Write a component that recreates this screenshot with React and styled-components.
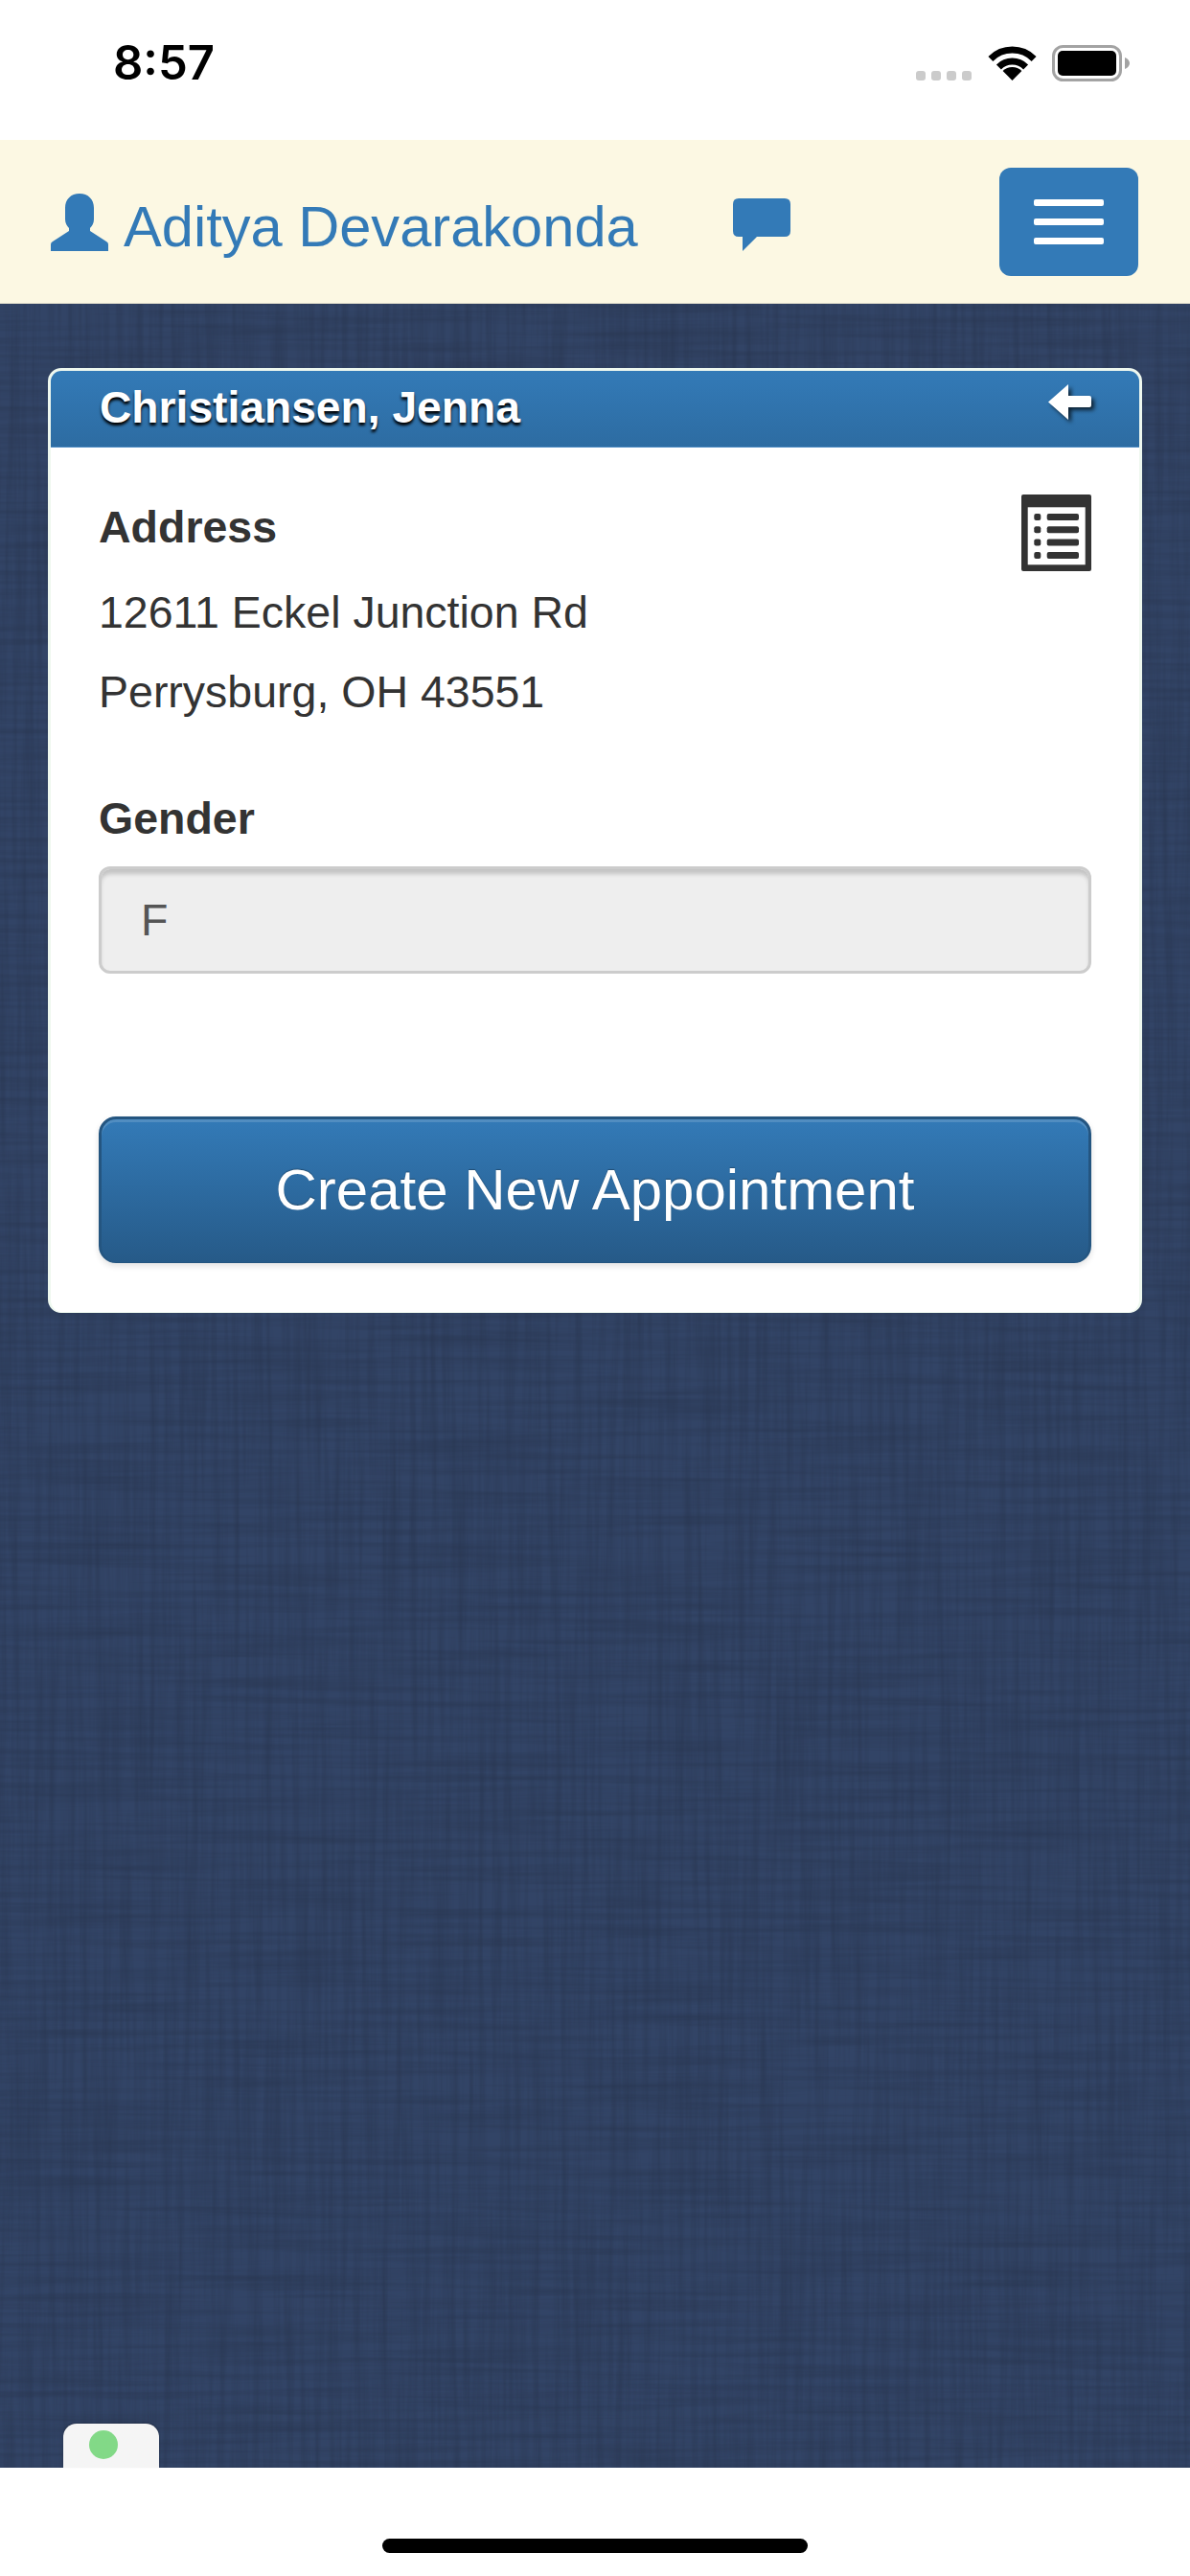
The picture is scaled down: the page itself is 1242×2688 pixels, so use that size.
import React from "react"
import styled, { createGlobalStyle } from "styled-components"

const linen = `<svg xmlns='http://www.w3.org/2000/svg' width='1242' height='2258'>
<filter id='v' x='0' y='0' width='100%' height='100%' color-interpolation-filters='sRGB'><feTurbulence type='fractalNoise' baseFrequency='0.14 0.005' numOctaves='3' seed='4'/><feColorMatrix values='0 0 0 0 0.15 0 0 0 0 0.2 0 0 0 0 0.3 0 0 0 0.9 -0.33'/></filter>
<filter id='h' x='0' y='0' width='100%' height='100%' color-interpolation-filters='sRGB'><feTurbulence type='fractalNoise' baseFrequency='0.005 0.14' numOctaves='3' seed='9'/><feColorMatrix values='0 0 0 0 0.15 0 0 0 0 0.2 0 0 0 0 0.3 0 0 0 0.9 -0.33'/></filter>
<rect width='1242' height='2258' filter='url(#v)'/><rect width='1242' height='2258' filter='url(#h)'/></svg>`

const GlobalStyle = createGlobalStyle`
  html, body {
    margin: 0;
    padding: 0;
    background: #fff;
  }
  * {
    box-sizing: border-box;
  }
`

const Screen = styled.div`
  position: relative;
  width: 1242px;
  height: 2688px;
  display: flex;
  flex-direction: column;
  font-family: "Liberation Sans", Arial, sans-serif;
  font-size: 46.5px;
  color: #333;
  background: #fff;
`

const StatusBar = styled.div`
  height: 146px;
  flex: none;
  display: flex;
  align-items: flex-start;
  justify-content: space-between;
  padding: 47px 63px 0 118px;
`

const Time = styled.div`
  font-family: Inter, "Liberation Sans", sans-serif;
  font-weight: 600;
  font-size: 49px;
  line-height: 38px;
  color: #000;
`

const StatusIcons = styled.div`
  display: flex;
  align-items: flex-start;
`

const SignalDots = styled.div`
  display: flex;
  gap: 6px;
  margin: 27px 17px 0 0;
`

const SignalDot = styled.span`
  width: 10px;
  height: 10px;
  border-radius: 3px;
  background: #cbcbcb;
`

const Battery = styled.svg`
  margin-left: 16px;
`

const Navbar = styled.div`
  height: 171px;
  flex: none;
  display: flex;
  align-items: flex-start;
  padding: 29px 54px 0 53px;
  background: #fcf8e3;
  border-bottom: 1px solid #e6e2d0;
`

const UserIcon = styled.svg`
  margin: 27px 16px 0 0;
  fill: #337ab7;
  flex: none;
`

const UserName = styled.a`
  font-size: 59.6px;
  line-height: 72px;
  margin-top: 26px;
  color: #337ab7;
`

const ChatIcon = styled.svg`
  margin: 32px 0 0 99px;
  fill: #337ab7;
  flex: none;
`

const MenuButton = styled.button`
  margin-left: auto;
  width: 145px;
  height: 113px;
  display: flex;
  flex-direction: column;
  align-items: center;
  justify-content: center;
  gap: 13px;
  padding: 0;
  border: none;
  border-radius: 12px;
  background: #337ab7;
`

const MenuBar = styled.span`
  width: 73px;
  height: 7px;
  border-radius: 2px;
  background: #fff;
`

const Main = styled.div`
  position: relative;
  flex: 1;
  padding: 67px 50px 0;
  background-color: #324466;
  background-image: url("data:image/svg+xml,${encodeURIComponent(linen)}");
`

const Card = styled.div`
  width: 1142px;
  height: 986px;
  background: #fff;
  border: 3px solid #eef8ef;
  border-bottom-width: 1px;
  border-radius: 14px;
  overflow: hidden;
`

const CardHeader = styled.div`
  height: 80px;
  display: flex;
  align-items: flex-start;
  justify-content: space-between;
  padding: 14px 50px 0 51px;
  background: linear-gradient(to bottom, #337ab7, #2d6ca2);
  border-bottom: 1px solid #4a8ac2;
`

const CardTitle = styled.div`
  font-weight: 700;
  font-size: 46.200px;
  line-height: 48px;
  color: #fff;
  text-shadow: 0 3px 3px #000;
`

const BackArrow = styled.svg`
  fill: #fff;
  filter: drop-shadow(3px 3px 2px rgba(0, 0, 0, 0.7));
`

const CardBody = styled.div`
  padding: 42px 50px 0;
`

const AddressRow = styled.div`
  display: flex;
  justify-content: space-between;
  align-items: flex-start;
`

const Label = styled.div`
  font-weight: 700;
  line-height: 83px;
`

const TextLine = styled.div`
  line-height: 83px;
`

const AddressBlock = styled.div`
  margin-bottom: 49px;
`

const ListIcon = styled.svg`
  margin-top: 7px;
  flex: none;
`

const AddressLines = styled.div`
  margin-top: 2px;
`

const GenderField = styled.div`
  height: 112px;
  margin-top: 8px;
  padding: 0 0 0 41px;
  display: flex;
  align-items: center;
  color: #555;
  background: #eee;
  border: 3px solid #ccc;
  border-radius: 12px;
  box-shadow: inset 0 6px 4px -1px rgba(0, 0, 0, 0.18);
`

const CreateButton = styled.button`
  width: 100%;
  height: 153px;
  margin-top: 149px;
  padding: 0 0 3px;
  display: block;
  font-family: inherit;
  font-size: 60px;
  color: #fff;
  text-shadow: 0 -1px 1px rgba(0, 0, 0, 0.3);
  background: linear-gradient(to bottom, #337ab7, #265a88);
  border: 3px solid #245580;
  border-bottom-width: 1px;
  border-radius: 18px;
  box-shadow: inset 0 3px 0 rgba(255, 255, 255, 0.15), 0 3px 6px rgba(0, 0, 0, 0.12);
`

const StatusTab = styled.div`
  position: absolute;
  left: 66px;
  bottom: 0;
  width: 100px;
  height: 46px;
  padding: 7px 0 0 27px;
  background: #f5f5f5;
  border-radius: 14px 14px 0 0;
  box-shadow: 0 -1px 2px rgba(0, 0, 0, 0.25);
`

const StatusLight = styled.div`
  width: 30px;
  height: 30px;
  border-radius: 50%;
  background: #82d987;
`

const Footer = styled.div`
  height: 113px;
  flex: none;
  display: flex;
  justify-content: center;
  padding: 74px 0 0 0;
  background: #fff;
`

const HomeBar = styled.div`
  width: 444px;
  height: 15px;
  border-radius: 8px;
  background: #000;
`

export default function App() {
  return (
    <Screen>
      <GlobalStyle />
      <StatusBar>
        <Time>8:57</Time>
        <StatusIcons>
          <SignalDots>
            <SignalDot />
            <SignalDot />
            <SignalDot />
            <SignalDot />
          </SignalDots>
          <svg width="51" height="37" viewBox="0 0 51 37">
            <path d="M2.9 14.4A32 32 0 0 1 48.1 14.4" fill="none" stroke="#000" strokeWidth="7" />
            <path d="M11.4 22.9A20 20 0 0 1 39.6 22.9" fill="none" stroke="#000" strokeWidth="7" />
            <path d="M25.5 37L15.6 27.1A14 14 0 0 1 35.4 27.1Z" fill="#000" />
          </svg>
          <Battery width="81" height="38" viewBox="0 0 81 38">
            <rect x="1.5" y="1.5" width="70" height="35" rx="10" fill="none" stroke="#a3a3a3" strokeWidth="3" />
            <rect x="6" y="6" width="61" height="26" rx="5" fill="#000" />
            <path d="M76 13C79 14 81 16.500 81 19C81 21.500 79 24 76 25Z" fill="#a3a3a3" />
          </Battery>
        </StatusIcons>
      </StatusBar>

      <Navbar>
        <UserIcon width="60" height="60" viewBox="0 0 60 60">
          <path d="M30 0C39 0 45 6 45 15V27C45 31 43 34 41 36V39L58 50Q60 51 60 53V60H0V53Q0 51 2 50L19 39V36C17 34 15 31 15 27V15C15 6 21 0 30 0Z" />
        </UserIcon>
        <UserName>Aditya Devarakonda</UserName>
        <ChatIcon width="60" height="55" viewBox="0 0 60 55">
          <path d="M6 0H54Q60 0 60 6V34Q60 40 54 40H25L10 55V40H6Q0 40 0 34V6Q0 0 6 0Z" />
        </ChatIcon>
        <MenuButton>
          <MenuBar />
          <MenuBar />
          <MenuBar />
        </MenuButton>
      </Navbar>

      <Main>
        <Card>
          <CardHeader>
            <CardTitle>Christiansen, Jenna</CardTitle>
            <BackArrow width="45" height="37" viewBox="0 0 45 37">
              <path d="M21 0V12H43Q45 12 45 14V22Q45 24 43 24H21V37L0 18.500Z" />
            </BackArrow>
          </CardHeader>
          <CardBody>
            <AddressBlock>
              <AddressRow>
                <Label>Address</Label>
                <ListIcon width="73" height="80" viewBox="0 0 73 80">
                  <rect width="73" height="80" rx="2" fill="#333" />
                  <rect x="6.700" y="13.300" width="60" height="60" fill="#fff" />
                  <g fill="#333">
                    <rect x="13.300" y="20" width="7" height="7" rx="2" />
                    <rect x="26.700" y="20" width="33.300" height="7" rx="2" />
                    <rect x="13.300" y="33.300" width="7" height="7" rx="2" />
                    <rect x="26.700" y="33.300" width="33.300" height="7" rx="2" />
                    <rect x="13.300" y="46.600" width="7" height="7" rx="2" />
                    <rect x="26.700" y="46.600" width="33.300" height="7" rx="2" />
                    <rect x="13.300" y="60" width="7" height="7" rx="2" />
                    <rect x="26.700" y="60" width="33.300" height="7" rx="2" />
                  </g>
                </ListIcon>
              </AddressRow>
              <AddressLines>
                <TextLine>12611 Eckel Junction Rd</TextLine>
                <TextLine>Perrysburg, OH 43551</TextLine>
              </AddressLines>
            </AddressBlock>
            <Label>Gender</Label>
            <GenderField>F</GenderField>
            <CreateButton>Create New Appointment</CreateButton>
          </CardBody>
        </Card>
        <StatusTab>
          <StatusLight />
        </StatusTab>
      </Main>

      <Footer>
        <HomeBar />
      </Footer>
    </Screen>
  )
}
